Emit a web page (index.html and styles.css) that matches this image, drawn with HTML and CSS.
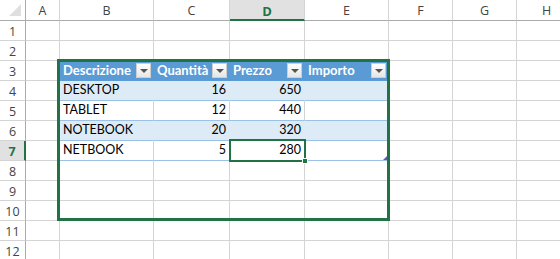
FILE: index.html
```html
<!DOCTYPE html>
<html lang="it">
<head>
<meta charset="utf-8">
<title>Excel</title>
<link rel="stylesheet" href="styles.css">
</head>
<body>
<div class="sheet">
  <div class="grid">
    <div class="ch corner"><span class="tri"></span></div>
    <div class="ch">A</div><div class="ch">B</div><div class="ch">C</div><div class="ch sel">D</div><div class="ch">E</div><div class="ch">F</div><div class="ch">G</div><div class="ch">H</div>

    <div class="rh">1</div><div class="c"></div><div class="c"></div><div class="c"></div><div class="c"></div><div class="c"></div><div class="c"></div><div class="c"></div><div class="c"></div>
    <div class="rh">2</div><div class="c"></div><div class="c"></div><div class="c"></div><div class="c"></div><div class="c"></div><div class="c"></div><div class="c"></div><div class="c"></div>

    <div class="rh">3</div><div class="c"></div>
    <div class="c th">Descrizione<span class="dd"></span></div>
    <div class="c th">Quantità<span class="dd"></span></div>
    <div class="c th">Prezzo<span class="dd"></span></div>
    <div class="c th">Importo<span class="dd"></span></div>
    <div class="c"></div><div class="c"></div><div class="c"></div>

    <div class="rh">4</div><div class="c"></div>
    <div class="c td band">DESKTOP</div><div class="c td band num">16</div><div class="c td band num">650</div><div class="c td band"></div>
    <div class="c"></div><div class="c"></div><div class="c"></div>

    <div class="rh">5</div><div class="c"></div>
    <div class="c td">TABLET</div><div class="c td num">12</div><div class="c td num">440</div><div class="c td"></div>
    <div class="c"></div><div class="c"></div><div class="c"></div>

    <div class="rh">6</div><div class="c"></div>
    <div class="c td band">NOTEBOOK</div><div class="c td band num">20</div><div class="c td band num">320</div><div class="c td band"></div>
    <div class="c"></div><div class="c"></div><div class="c"></div>

    <div class="rh sel">7</div><div class="c"></div>
    <div class="c td">NETBOOK</div><div class="c td num">5</div><div class="c td num">280</div><div class="c td"></div>
    <div class="c"></div><div class="c"></div><div class="c"></div>

    <div class="rh">8</div><div class="c"></div><div class="c"></div><div class="c"></div><div class="c"></div><div class="c"></div><div class="c"></div><div class="c"></div><div class="c"></div>
    <div class="rh">9</div><div class="c"></div><div class="c"></div><div class="c"></div><div class="c"></div><div class="c"></div><div class="c"></div><div class="c"></div><div class="c"></div>
    <div class="rh">10</div><div class="c"></div><div class="c"></div><div class="c"></div><div class="c"></div><div class="c"></div><div class="c"></div><div class="c"></div><div class="c"></div>
    <div class="rh">11</div><div class="c"></div><div class="c"></div><div class="c"></div><div class="c"></div><div class="c"></div><div class="c"></div><div class="c"></div><div class="c"></div>
    <div class="rh">12</div><div class="c"></div><div class="c"></div><div class="c"></div><div class="c"></div><div class="c"></div><div class="c"></div><div class="c"></div><div class="c"></div>
  </div>

  <div class="range"></div>
  <div class="active"><span class="handle"></span></div>
  <div class="resize"></div>
</div>
</body>
</html>
```

FILE: styles.css
```css
* { box-sizing: border-box; }
html, body { margin: 0; padding: 0; background: #fff; }
body { width: 560px; height: 259px; overflow: hidden; }

.sheet {
  position: relative;
  width: 560px;
  height: 259px;
  overflow: hidden;
  font-family: "Lato", "Liberation Sans", sans-serif;
  font-size: 12.5px;
  color: #000;
}

.grid {
  display: grid;
  grid-template-columns: 26px 34px 94px 76px 75px 84px 64px 64px 60px;
  grid-template-rows: 21px repeat(12, 20px);
}

.c {
  border-right: 1px solid #d4d4d4;
  border-bottom: 1px solid #d4d4d4;
  display: flex;
  align-items: flex-end;
  padding: 0 3px 3px 3px;
  white-space: nowrap;
  overflow: visible;
  line-height: 14px;
}

.ch {
  border-right: 1px solid #d4d4d4;
  border-bottom: 1px solid #ababab;
  display: flex;
  align-items: center;
  justify-content: center;
  font-family: "Open Sans", "Noto Sans", sans-serif;
  font-size: 12.5px;
  color: #444;
  padding-top: 1px;
}
.ch.sel {
  background: #e1e1e1;
  color: #217346;
  font-weight: bold;
  font-size: 13px;
  border-bottom: 2px solid #217346;
  padding-top: 2px;
}
.corner { position: relative; border-right-color: #ababab; }
.corner .tri {
  position: absolute;
  right: 4px;
  bottom: 4px;
  width: 0;
  height: 0;
  border-left: 12px solid transparent;
  border-bottom: 12px solid #dfdfdf;
}

.rh {
  border-right: 1px solid #ababab;
  border-bottom: 1px solid #d4d4d4;
  display: flex;
  align-items: center;
  justify-content: center;
  font-family: "Open Sans", "Noto Sans", sans-serif;
  font-size: 12.5px;
  color: #444;
  padding-top: 1px;
}
.rh.sel {
  background: #e1e1e1;
  color: #217346;
  font-weight: bold;
  border-right: 2px solid #217346;
}

.th {
  background: #5b9bd5;
  border-right-color: #5b9bd5;
  border-bottom-color: #5b9bd5;
  color: #fff;
  font-weight: bold;
  font-size: 13px;
  justify-content: space-between;
  padding-right: 2px;
  padding-bottom: 3px;
}
.dd {
  width: 15px;
  height: 15px;
  margin-bottom: -1px;
  background: linear-gradient(#ffffff, #e6e6e6);
  border: 1px solid #cfcfcf;
  position: relative;
  flex: none;
}
.dd::after {
  content: "";
  position: absolute;
  left: 3px;
  top: 5px;
  border-left: 4px solid transparent;
  border-right: 4px solid transparent;
  border-top: 4px solid #555;
}

.td { border-bottom-color: #9bc2e6; }
.td.band {
  background: #ddebf7;
  border-right-color: #ddebf7;
}
.num { justify-content: flex-end; }

.range {
  position: absolute;
  left: 57px;
  top: 59px;
  width: 333px;
  height: 162px;
  border: 3px solid #217346;
  pointer-events: none;
}
.active {
  position: absolute;
  left: 229px;
  top: 139px;
  width: 77px;
  height: 23px;
  border: 2px solid #217346;
}
.handle {
  position: absolute;
  right: -4px;
  bottom: -4px;
  width: 6px;
  height: 6px;
  background: #217346;
  border: 1px solid #fff;
}
.resize {
  position: absolute;
  left: 383px;
  top: 156px;
  width: 0;
  height: 0;
  border-left: 4px solid transparent;
  border-bottom: 4px solid #5b5fb5;
}
```
